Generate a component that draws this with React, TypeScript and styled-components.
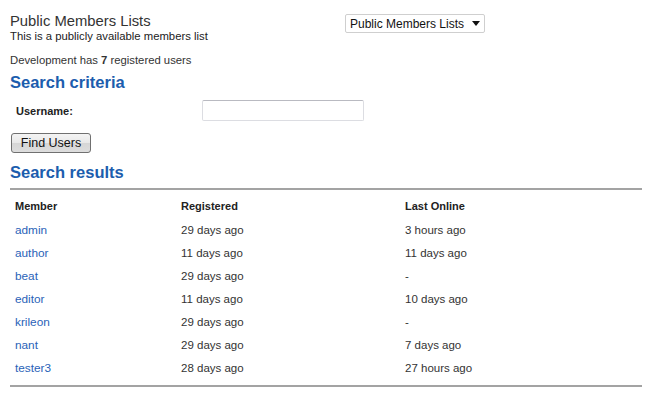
import React from 'react';
import styled, { createGlobalStyle } from 'styled-components';

const GlobalStyle = createGlobalStyle`
  body {
    margin: 0;
    background: #ffffff;
    font-family: "Liberation Sans", Arial, sans-serif;
    color: #333333;
  }
`;

const Page = styled.div`
  width: 632px;
  padding: 12px 10px 0 10px;
`;

const TopBar = styled.div`
  display: grid;
  grid-template-columns: 335px auto;
  align-items: start;
`;

const Title = styled.div`
  font-size: 14.8px;
  line-height: 18px;
  color: #333;
`;

const Subtitle = styled.div`
  font-size: 11.3px;
  line-height: 13px;
  color: #222;
`;

const ListSelect = styled.div`
  margin-top: 2px;
  width: 140px;
  height: 19px;
  box-sizing: border-box;
  border: 1px solid #cfcfcf;
  border-radius: 2px;
  display: flex;
  align-items: center;
  justify-content: space-between;
  padding: 0 4px 0 4px;
  font-size: 12px;
  white-space: nowrap;
  color: #111;
  background: #fff;

  svg {
    width: 8px;
    height: 5px;
    fill: #111;
  }
`;

const Stats = styled.div`
  margin-top: 10px;
  font-size: 11.3px;
  line-height: 14px;
  color: #333;
`;

const SectionHeading = styled.h2<{ gap: number }>`
  margin: ${p => p.gap}px 0 0 0;
  font-size: 16.5px;
  line-height: 20px;
  font-weight: bold;
  color: #1c5dae;
`;

const FormRow = styled.div`
  display: grid;
  grid-template-columns: 186px auto;
  align-items: center;
  margin-top: 8px;
  padding-left: 6px;
`;

const Label = styled.label`
  font-size: 11px;
  font-weight: bold;
  color: #222;
`;

const TextInput = styled.input`
  width: 162px;
  height: 21px;
  box-sizing: border-box;
  border: 1px solid #dcdde2;
  border-top-color: #b9bac1;
  border-radius: 2px;
  padding: 2px 4px;
  font-family: inherit;
  font-size: 12px;
`;

const Button = styled.button`
  margin-top: 12px;
  margin-left: 1px;
  width: 80px;
  height: 20px;
  box-sizing: border-box;
  padding: 0;
  font-family: "Liberation Sans", Arial, sans-serif;
  font-size: 12.5px;
  color: #111;
  border: 1px solid #707070;
  border-radius: 3px;
  background: linear-gradient(#f4f4f4 0%, #e8e8e8 50%, #d6d6d6 51%, #dddddd 100%);
  display: block;
`;

const Table = styled.table`
  margin-top: 6px;
  width: 632px;
  border-collapse: collapse;
  border-top: 2px solid #a3a3a3;
  border-bottom: 2px solid #a3a3a3;
  font-size: 11.5px;

  tbody tr:last-child td {
    padding-bottom: 5px;
  }
`;

const HeadCell = styled.th<{ w?: number }>`
  text-align: left;
  font-weight: bold;
  font-size: 11px;
  line-height: 12px;
  color: #222;
  padding: 10px 5px 7px 5px;
  width: ${p => (p.w ? `${p.w - 10}px` : 'auto')};
`;

const Cell = styled.td`
  padding: 0 5px;
  height: 23px;
  line-height: 23px;
  color: #333;
`;

const MemberLink = styled.a`
  color: #2a62b8;
  font-size: 11.8px;
  text-decoration: none;
`;

const members = [
  { name: 'admin', registered: '29 days ago', online: '3 hours ago' },
  { name: 'author', registered: '11 days ago', online: '11 days ago' },
  { name: 'beat', registered: '29 days ago', online: '-' },
  { name: 'editor', registered: '11 days ago', online: '10 days ago' },
  { name: 'krileon', registered: '29 days ago', online: '-' },
  { name: 'nant', registered: '29 days ago', online: '7 days ago' },
  { name: 'tester3', registered: '28 days ago', online: '27 hours ago' },
];

const App: React.FC = () => {
  return (
    <Page>
      <GlobalStyle />
      <TopBar>
        <div>
          <Title>Public Members Lists</Title>
          <Subtitle>This is a publicly available members list</Subtitle>
        </div>
        <ListSelect>
          <span>Public Members Lists</span>
          <svg viewBox="0 0 8 5">
            <path d="M0 0h8L4 5z" />
          </svg>
        </ListSelect>
      </TopBar>

      <Stats>
        Development has <b>7</b> registered users
      </Stats>

      <SectionHeading gap={5}>Search criteria</SectionHeading>
      <FormRow>
        <Label>Username:</Label>
        <TextInput type="text" />
      </FormRow>
      <Button>Find Users</Button>

      <SectionHeading gap={9}>Search results</SectionHeading>
      <Table>
        <thead>
          <tr>
            <HeadCell w={166}>Member</HeadCell>
            <HeadCell w={224}>Registered</HeadCell>
            <HeadCell>Last Online</HeadCell>
          </tr>
        </thead>
        <tbody>
          {members.map(m => (
            <tr key={m.name}>
              <Cell>
                <MemberLink href="#">{m.name}</MemberLink>
              </Cell>
              <Cell>{m.registered}</Cell>
              <Cell>{m.online}</Cell>
            </tr>
          ))}
        </tbody>
      </Table>
    </Page>
  );
};

export default App;
